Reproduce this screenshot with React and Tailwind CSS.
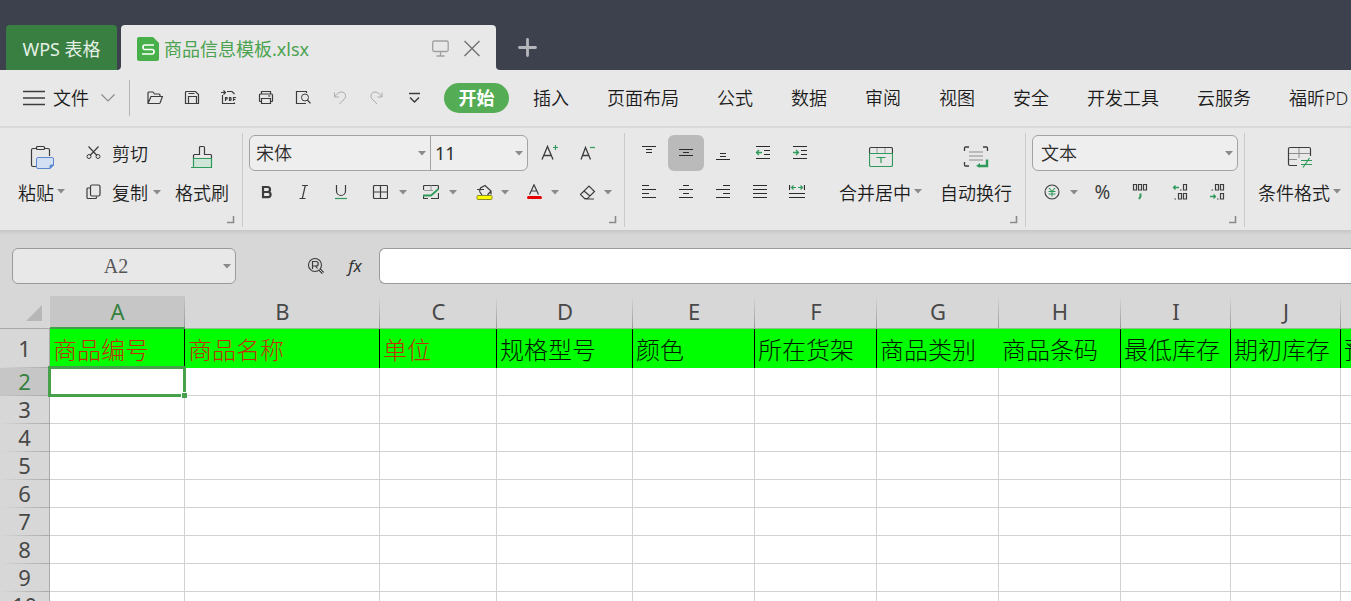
import React, { useState } from "react";

const INK = "#3c3c3c";
const GREEN = "#2f9a5a";

const menus = [
  "插入",
  "页面布局",
  "公式",
  "数据",
  "审阅",
  "视图",
  "安全",
  "开发工具",
  "云服务",
  "福昕PD",
];

const columns = [
  { id: "A", width: "w-[135px]", title: "商品编号", required: true },
  { id: "B", width: "w-[195px]", title: "商品名称", required: true },
  { id: "C", width: "w-[117px]", title: "单位", required: true },
  { id: "D", width: "w-[136px]", title: "规格型号" },
  { id: "E", width: "w-[122px]", title: "颜色" },
  { id: "F", width: "w-[122px]", title: "所在货架" },
  { id: "G", width: "w-[122px]", title: "商品类别", open: true },
  { id: "H", width: "w-[122px]", title: "商品条码" },
  { id: "I", width: "w-[110px]", title: "最低库存" },
  { id: "J", width: "w-[110px]", title: "期初库存" },
  { id: "K", width: "w-[110px]", title: "预" },
];

const rows = [2, 3, 4, 5, 6, 7, 8, 9, 10];

const Icon = ({ w = 16, h = 16, children, stroke = INK }) => (
  <svg
    width={w}
    height={h}
    viewBox={`0 0 ${w} ${h}`}
    fill="none"
    stroke={stroke}
    className="shrink-0"
    aria-hidden="true"
  >
    {children}
  </svg>
);

const Caret = () => (
  <svg width="8" height="5" viewBox="0 0 8 5" className="shrink-0" aria-hidden="true">
    <path d="M0 0h8L4 4.5z" fill="#8a8a8a" />
  </svg>
);

const ToolButton = ({ label, className = "w-[37px]", children }) => (
  <button
    title={label}
    aria-label={label}
    className={`flex h-9 shrink-0 items-center justify-center ${className}`}
  >
    {children}
  </button>
);

// Icon with a drop-down caret next to it
const SplitButton = ({ label, className, children }) => (
  <button
    title={label}
    aria-label={label}
    className={`flex h-9 shrink-0 items-center justify-between ${className}`}
  >
    {children}
    <Caret />
  </button>
);

const BigButton = ({ label, caret, icon, className = "" }) => (
  <button className={`flex shrink-0 flex-col gap-[3px] ${className}`}>
    <span className="flex h-9 w-full items-center justify-center pt-2">{icon}</span>
    <span className="flex h-9 items-center gap-[3px] pt-0.5 whitespace-nowrap">
      {label}
      {caret && (
        <span className="pb-1">
          <Caret />
        </span>
      )}
    </span>
  </button>
);

const Group = ({ launcher = true, className = "", children }) => (
  <section className={`flex shrink-0 flex-col pt-[7px] ${className}`}>
    <div className="flex">{children}</div>
    {launcher && (
      <button aria-label="更多设置" className="mt-[6px] mr-[7px] self-end">
        <Icon w={8} h={8} stroke="#8a8a8a">
          <path d="M0 6.5h6.5V0" strokeWidth="1.6" />
        </Icon>
      </button>
    )}
  </section>
);

const Divider = () => <div className="mt-[5px] h-[94px] w-px shrink-0 bg-[#cbcbcb]" />;

const Combo = ({ label, value, className }) => (
  <label className={`relative flex h-9 items-center ${className}`}>
    <select
      aria-label={label}
      defaultValue={value}
      className="h-full w-full appearance-none bg-transparent pl-1.5 pr-4 text-[18px] outline-none"
    >
      <option>{value}</option>
    </select>
    <span className="pointer-events-none absolute right-1">
      <Caret />
    </span>
  </label>
);

const TitleBar = () => (
  <header className="bg-[#3d414e] pt-[25px]">
    <div className="flex h-[45px]">
      <button className="ml-1.5 w-[111px] rounded-t-[4px] bg-[#397f41] pt-1 text-[18px] font-normal text-[#e4f0e5]">
        WPS 表格
      </button>
      <div className="mt-4 w-1 bg-[#e8e8e8]">
        <div className="h-full rounded-br-[4px] bg-[#3d414e]" />
      </div>
      <div className="flex w-[375px] items-center rounded-t-[4px] bg-[#e8e8e8] px-4 pt-0.5">
        <Icon w={22} h={24} stroke="none">
          <path d="M2 0h14l6 6v16a2 2 0 0 1-2 2H2a2 2 0 0 1-2-2V2a2 2 0 0 1 2-2z" fill="#47b04b" />
          <path
            d="M17 8H8Q6 8 6 10.300T8 12.500H15Q17 12.500 17 14.800T15 17H5"
            stroke="#fff"
            strokeWidth="1.700"
          />
        </Icon>
        <span className="ml-[5px] pt-0.5 text-[18px] font-normal text-[#4ba350]">商品信息模板.xlsx</span>
        <button aria-label="演示" className="ml-auto mr-[15px]">
          <Icon w={17} h={17} stroke="#a0a0a0">
            <rect x=".7" y="1" width="15.500" height="10.500" rx="1.500" strokeWidth="1.300" />
            <path d="M8.500 12v4M4.500 16h8" strokeWidth="1.300" />
          </Icon>
        </button>
        <button aria-label="关闭">
          <Icon w={16} h={17} stroke="#747474">
            <path d="M.5 1l15 15M15.500 1L.5 16" strokeWidth="1.500" />
          </Icon>
        </button>
      </div>
      <div className="mt-4 flex flex-1 bg-[#e8e8e8]">
        <div className="flex flex-1 items-start rounded-bl-[4px] bg-[#3d414e] pl-[22px]">
          <button aria-label="新建" className="-mt-[3px]">
            <Icon w={19} h={19} stroke="#b4b6bb">
              <path d="M9.500 1.500v16M1.500 9.500h16" strokeWidth="2.800" strokeLinecap="round" />
            </Icon>
          </button>
        </div>
      </div>
    </div>
  </header>
);

const MenuBar = () => (
  <nav className="flex h-[58px] items-center overflow-hidden border-b-2 border-[#d9d9d9] text-[18px] whitespace-nowrap text-[#1c1c1c]">
    <button className="ml-[23px] flex shrink-0 items-center">
      <Icon w={22} h={16}>
        <path d="M0 1.500h22M0 8h22M0 14.500h22" strokeWidth="1.300" />
      </Icon>
      <span className="ml-2 mr-3">文件</span>
      <Icon w={14} h={8} stroke="#8c8c8c">
        <path d="M.5.5L7 7 13.500.5" strokeWidth="1.200" />
      </Icon>
    </button>
    <div className="ml-3.5 mr-1.5 h-9 w-px shrink-0 bg-[#b5b5b5]" />

    <ToolButton label="打开">
      <Icon>
        <path d="M1 13.500V3a1 1 0 0 1 1-1h4l1.500 2H12a1 1 0 0 1 1 1v1.500M1 13.500L4 6.500h11.500L13 13a1 1 0 0 1-1 .5z" strokeLinejoin="round" strokeWidth="1.200" />
      </Icon>
    </ToolButton>
    <ToolButton label="保存">
      <Icon>
        <path d="M2.500 1.500h9l3 3v9h-13v-11a1 1 0 0 1 1-1zM4.500 13V6.500h8V13M4.500 3.500h6" strokeWidth="1.200" />
      </Icon>
    </ToolButton>
    <ToolButton label="输出为PDF">
      <Icon>
        <path d="M0 2.500h4M2.500.5l2 2-2 2M6 1.500h5l2.500 2.500M1.500 5v8.500h12v-1" strokeWidth="1.200" />
        <path d="M4.500 11V7.500h1.500v1.500H4.500M8.500 7.500v3h1l.5-.5V8l-.5-.5zM12.500 11V7.500H15M12.500 9.500H14.500" strokeWidth="1.200" />
      </Icon>
    </ToolButton>
    <ToolButton label="打印">
      <Icon>
        <path d="M3.500 4V1.500h9V4M3.500 11.500H2a.5.5 0 0 1-.5-.5V5a1 1 0 0 1 1-1h11a1 1 0 0 1 1 1v6a.5.5 0 0 1-.5.5h-1.500M10 6h2.500M3.500 8.500h9v5h-9z" strokeWidth="1.200" />
      </Icon>
    </ToolButton>
    <ToolButton label="打印预览">
      <Icon>
        <path d="M11.500 3V1.500h-10V13.500H11" strokeWidth="1.200" />
        <circle cx="10" cy="7.500" r="3.500" />
        <path d="M12.300 10l3.200 3.300" strokeWidth="1.200" />
      </Icon>
    </ToolButton>
    <ToolButton label="撤销">
      <Icon stroke="#ababab">
        <path d="M2.500 2.500v4.500h4.500M2.500 7C5 3.500 7 2 9.500 2a4 4 0 0 1 3 6.800L7.500 14" />
      </Icon>
    </ToolButton>
    <ToolButton label="恢复">
      <Icon stroke="#ababab">
        <path d="M13 2.500v4.500H8.500M13 7C10.500 3.500 8.500 2 6 2a4 4 0 0 0-3 6.800L8 14" />
      </Icon>
    </ToolButton>
    <ToolButton label="自定义快速访问工具栏">
      <Icon>
        <path d="M3 3.500h11M4 7.500l4.500 4.500L13 7.500" strokeWidth="1.500" />
      </Icon>
    </ToolButton>

    <button className="ml-3 mr-6 h-[30px] w-[65px] shrink-0 rounded-full bg-[#54ad54] font-bold text-white">
      开始
    </button>
    <div className="flex gap-[38px]">
      {menus.map((name) => (
        <button key={name} className="shrink-0">
          {name}
        </button>
      ))}
    </div>
  </nav>
);

const Lines = ({ d }) => (
  <Icon stroke="#2b2b2b">
    <path d={d} strokeWidth="1.200" />
  </Icon>
);

const Ribbon = () => (
  <div className="flex h-[102px] overflow-hidden text-[18px] text-[#1c1c1c]">
    <Group className="w-[242px]">
      <BigButton
        label="粘贴"
        caret
        className="ml-[18px]"
        icon={
          <Icon w={24} h={24}>
            <path d="M6 3.500H3a1.500 1.500 0 0 0-1.500 1.500v15A1.500 1.500 0 0 0 3 21.500h3M15 3.500h3A1.500 1.500 0 0 1 19.500 5v6" strokeWidth="1.200" />
            <rect x="6.500" y="1.500" width="8" height="3" rx="1" strokeWidth="1.200" />
            <path d="M8 12.500h14a1.500 1.500 0 0 1 1.500 1.500v6l-3.500 3.500H8A1.500 1.500 0 0 1 6.500 22v-8A1.500 1.500 0 0 1 8 12.500z" fill="#d3dff3" stroke="#5b87cf" />
            <path d="M23.500 20l-3.500 3.500v-2.500a1 1 0 0 1 1-1z" fill="#5b87cf" stroke="#5b87cf" />
          </Icon>
        }
      />
      <div className="ml-[21px] flex w-[75px] flex-col gap-[3px]">
        <button className="flex h-9 items-center">
          <Icon w={15} h={16}>
            <path d="M2.500 1.500l8.500 9M12.500 1.500L4 10.500" strokeWidth="1.200" />
            <circle cx="3" cy="11.500" r="2" />
            <circle cx="12" cy="11.500" r="2" />
          </Icon>
          <span className="ml-[11px] pt-0.5">剪切</span>
        </button>
        <button className="flex h-9 items-center">
          <Icon w={15} h={16}>
            <rect x="4.500" y="1" width="9.500" height="11" rx="1.500" strokeWidth="1.200" />
            <path d="M4 4H2a1 1 0 0 0-1 1v8.500a1 1 0 0 0 1 1h7.500a1 1 0 0 0 1-1V12.500" strokeWidth="1.200" />
          </Icon>
          <span className="ml-[11px] mr-[5px] pt-0.5">复制</span>
          <Caret />
        </button>
      </div>
      <BigButton
        label="格式刷"
        className="ml-[14px]"
        icon={
          <Icon w={22} h={24}>
            <path d="M2.500 13V10.500a1 1 0 0 1 1-1H8.500V2.500a1 1 0 0 1 1-1h3a1 1 0 0 1 1 1v7h6a1 1 0 0 1 1 1V13" strokeWidth="1.200" />
            <path d="M0 22.500h20.500v-9h-18V22" fill="#cfe5d8" stroke={GREEN} strokeWidth="1.200" />
          </Icon>
        }
      />
    </Group>
    <Divider />

    <Group className="w-[381px]">
      <div className="ml-1.5 flex flex-1 flex-col gap-[3px]">
        <div className="flex">
          <div className="flex h-9 w-[279px] rounded-md border border-[#a3a3a3] bg-[#eee] text-[#2c2c2c]">
            <Combo label="字体" value="宋体" className="-mt-px w-[181px] border-r border-[#a3a3a3]" />
            <Combo label="字号" value="11" className="-mt-px -ml-0.5 flex-1 font-normal" />
          </div>
          <ToolButton label="增大字号" className="ml-[3px] w-[38px]">
            <Icon w={18} h={18}>
              <path d="M1 15.500L6.500 2.500l5.500 13M3 11.500h7" strokeWidth="1.300" />
              <path d="M14.500 1v5M12 3.500h5" stroke={GREEN} strokeWidth="1.200" />
            </Icon>
          </ToolButton>
          <ToolButton label="减小字号" className="w-[38px]">
            <Icon w={18} h={18}>
              <path d="M2 15.500L6.500 3.500l5 12M4 11.500h6" strokeWidth="1.300" />
              <path d="M11 3.500h5" stroke={GREEN} strokeWidth="1.200" />
            </Icon>
          </ToolButton>
        </div>
        <div className="flex">
          <ToolButton label="加粗" className="w-[35px]">
            <Icon>
              <path d="M4 3h4.500a2.300 2.300 0 0 1 0 5H4zM4 8h5a2.500 2.500 0 0 1 0 5.200H4z" strokeWidth="2.200" />
            </Icon>
          </ToolButton>
          <ToolButton label="倾斜" className="w-10">
            <Icon>
              <path d="M6 1.500h6M3.500 14.500h6M9.300 1.500l-3 13" strokeWidth="1.200" />
            </Icon>
          </ToolButton>
          <ToolButton label="下划线" className="w-[34px]">
            <Icon>
              <path d="M3.500 1v6a4.500 4.500 0 0 0 9 0V1" strokeWidth="1.200" />
              <path d="M2 14.500h12" stroke={GREEN} strokeWidth="1.200" />
            </Icon>
          </ToolButton>
          <SplitButton label="边框" className="ml-[14px] w-[35px]">
            <Icon>
              <rect x="1.500" y="1.500" width="14" height="13" rx="1" strokeWidth="1.200" />
              <path d="M8.500 1.500v13M1.500 8h14" strokeWidth="1.200" />
            </Icon>
          </SplitButton>
          <SplitButton label="绘图边框" className="ml-4 w-[34px]">
            <Icon>
              <path d="M.5 6V2.500a1 1 0 0 1 1-1h13a1 1 0 0 1 1 1V5M15.500 9v5.500H8M.5 12v2.500H5" strokeWidth="1.200" />
              <path d="M8 1.500V7M1 6.500h9" stroke="#9a9a9a" />
              <path d="M0 11.500h8L15.500 5" stroke={GREEN} strokeWidth="1.800" />
            </Icon>
          </SplitButton>
          <SplitButton label="填充颜色" className="ml-[19px] w-[33px]">
            <Icon w={17} h={17}>
              <path d="M1 5.500h7M3.500 7.500L4.500 4 9 1.500l6 5.500-3.500 4M3.500 7.500L6 11M15 7v3.500" strokeWidth="1.200" />
              <rect x="1" y="11.500" width="15" height="4" rx="1" fill="#ff0" stroke="#8d8d28" />
            </Icon>
          </SplitButton>
          <SplitButton label="字体颜色" className="ml-[18px] w-8">
            <Icon>
              <path d="M2.500 10.500L7 .8l4.500 9.700M4.300 7h5.500" strokeWidth="1.200" />
              <path d="M1.500 13.500h12" stroke="#e60000" strokeWidth="3" strokeLinecap="round" />
            </Icon>
          </SplitButton>
          <SplitButton label="清除" className="ml-5 w-[33px]">
            <Icon w={17} h={17}>
              <path d="M1.500 10.500L10 2l5.500 5.500L8.500 14.500h-3zM5 7l6 5M5.500 15h9.500" strokeWidth="1.200" />
            </Icon>
          </SplitButton>
        </div>
      </div>
    </Group>
    <Divider />

    <Group className="w-[400px]">
      <div className="ml-[5px] flex w-[190px] flex-col gap-[3px]">
        <div className="flex">
          <ToolButton label="顶端对齐" className="w-[38px]">
            <Lines d="M1 1.500h14M5 4.500h6M5 7.500h6" />
          </ToolButton>
          <ToolButton label="垂直居中" className="w-9 rounded-md bg-[#bababa]">
            <Lines d="M1 4.500h14M5 7.500h6M1 10.500h14" />
          </ToolButton>
          <ToolButton label="底端对齐" className="w-[38px]">
            <Lines d="M5 8.500h6M5 11.500h6M1 14.500h14" />
          </ToolButton>
          <ToolButton label="减少缩进量" className="ml-0.5 w-[37px]">
            <Icon stroke="#2b2b2b">
              <path d="M1 1.500h14M9 5.500h6M9 9.500h6M1 13.500h14" strokeWidth="1.200" />
              <path d="M7 7.500H1M4 5L1.500 7.500 4 10" stroke={GREEN} strokeWidth="1.300" />
            </Icon>
          </ToolButton>
          <ToolButton label="增加缩进量">
            <Icon stroke="#2b2b2b">
              <path d="M1 1.500h14M9 5.500h6M9 9.500h6M1 13.500h14" strokeWidth="1.200" />
              <path d="M1 7.500h6M4 5l2.500 2.500L4 10" stroke={GREEN} strokeWidth="1.300" />
            </Icon>
          </ToolButton>
        </div>
        <div className="flex">
          <ToolButton label="左对齐">
            <Lines d="M1 1.500h7M1 5.500h14M1 9.500h7M1 13.500h14" />
          </ToolButton>
          <ToolButton label="居中">
            <Lines d="M5 1.500h6M1 5.500h14M5 9.500h6M1 13.500h14" />
          </ToolButton>
          <ToolButton label="右对齐">
            <Lines d="M8 1.500h7M1 5.500h14M8 9.500h7M1 13.500h14" />
          </ToolButton>
          <ToolButton label="两端对齐">
            <Lines d="M1 1.500h14M1 5.500h14M1 9.500h14M1 13.500h14" />
          </ToolButton>
          <ToolButton label="分散对齐">
            <Icon stroke="#2b2b2b">
              <path d="M.5 1v5M15.500 1v5M0 9.500h16M0 13.500h16" strokeWidth="1.200" />
              <path d="M7 3.500H2.500M4.500 1.500l-2 2 2 2M9 3.500h4.500M11.500 1.500l2 2-2 2" stroke={GREEN} strokeWidth="1.200" />
            </Icon>
          </ToolButton>
        </div>
      </div>
      <BigButton
        label="合并居中"
        caret
        className="ml-[19px]"
        icon={
          <Icon w={24} h={22}>
            <path d="M.5 7.500V3A1.500 1.500 0 0 1 2 1.500h20A1.500 1.500 0 0 1 23.500 3v4.500" strokeWidth="1.200" />
            <path d="M8 2v5M16 2v5" stroke="#9a9a9a" />
            <path d="M.5 7.500h23V19a1.500 1.500 0 0 1-1.500 1.500H2A1.500 1.500 0 0 1 .5 19zM7.500 11.500h9M12 11.500V17" stroke={GREEN} strokeWidth="1.200" />
          </Icon>
        }
      />
      <BigButton
        label="自动换行"
        className="ml-[18px]"
        icon={
          <Icon w={26} h={22}>
            <path d="M1.500 5V2a1 1 0 0 1 1-1H6M20 1h3.500a1 1 0 0 1 1 1v3M1.500 16v3a1 1 0 0 0 1 1H6" strokeWidth="1.300" />
            <path d="M6 6h14M6 10h14M6 14h14" stroke="#8c8c8c" />
            <path d="M24 13.500V20H15" stroke={GREEN} strokeWidth="2.400" />
            <path d="M13 20l4-3v4.500z" fill={GREEN} stroke="none" />
          </Icon>
        }
      />
    </Group>
    <Divider />

    <Group className="w-[218px]">
      <div className="ml-1.5 flex flex-col gap-[3px]">
        <div className="h-9 w-[206px] rounded-md border border-[#a3a3a3] bg-[#eee] text-[#2c2c2c]">
          <Combo label="数字格式" value="文本" className="-mt-px pl-0.5" />
        </div>
        <div className="flex">
          <SplitButton label="货币样式" className="ml-3 w-[34px]">
            <Icon>
              <circle cx="8" cy="8" r="7" strokeWidth="1.100" />
              <path d="M5 4l3 3.500L11 4M4.500 7.500h7M4.500 10h7M8 7.500V12.500" stroke={GREEN} strokeWidth="1.100" />
            </Icon>
          </SplitButton>
          <ToolButton label="百分比样式" className="ml-1.5 w-[37px]">
            <span className="text-[19px] font-normal text-[#3c3c3c]">%</span>
          </ToolButton>
          <ToolButton label="千位分隔样式">
            <Icon w={16} h={18}>
              <path d="M1.500 1.500h3v5.500h-3zM6.500 1.500h3v5.500h-3zM11.500 1.500h3v5.500h-3z" strokeWidth="1.200" />
              <path d="M8.500 10.500v3L7 16" stroke={GREEN} strokeWidth="2" />
            </Icon>
          </ToolButton>
          <ToolButton label="增加小数位数" className="ml-[3px] w-[37px]">
            <Icon w={16} h={18}>
              <path d="M11.500 1.500h3v5.500h-3zM6.500 10.500h3V16h-3zM11.500 10.500h3V16h-3z" strokeWidth="1.200" />
              <path d="M8 7h1.500M2.500 16H4" strokeWidth="1.200" />
              <path d="M7 4.500H1.500M3.500 2.500l-2 2 2 2" stroke={GREEN} strokeWidth="1.300" />
            </Icon>
          </ToolButton>
          <ToolButton label="减少小数位数">
            <Icon w={16} h={18}>
              <path d="M6.500 1.500h3v5.500h-3zM11.500 1.500h3v5.500h-3zM11.500 10.500h3V16h-3z" strokeWidth="1.200" />
              <path d="M2.500 7H4M8 16h1.500" strokeWidth="1.200" />
              <path d="M1 13.500h5.500M4.500 11.500l2 2-2 2" stroke={GREEN} strokeWidth="1.300" />
            </Icon>
          </ToolButton>
        </div>
      </div>
    </Group>
    <Divider />

    <Group launcher={false}>
      <BigButton
        label="条件格式"
        caret
        className="ml-[13px]"
        icon={
          <Icon w={26} h={22}>
            <path d="M10 19.500H3A1.500 1.500 0 0 1 1.500 18V3A1.500 1.500 0 0 1 3 1.500h19A1.500 1.500 0 0 1 23.500 3v7" strokeWidth="1.200" />
            <path d="M2 7.500h21M12 2v10M2 13.500h8" stroke="#8c8c8c" />
            <path d="M14 14.500h11M14 18.500h11M22.500 12L16 21.500" stroke={GREEN} strokeWidth="1.200" />
          </Icon>
        }
      />
    </Group>
  </div>
);

const FormulaBar = () => {
  const [value, setValue] = useState("");

  return (
    <div className="flex h-[66px] items-center bg-[linear-gradient(to_bottom,#c6c6c6,#d7d7d7_5px)] pt-1.5 pl-3">
      <label className="relative flex h-9 w-[224px] items-center rounded-md border border-[#9a9a9a] bg-[#e8e8e8]">
        <input
          aria-label="名称框"
          defaultValue="A2"
          className="h-full w-full bg-transparent pr-4 text-center font-['Liberation_Serif',serif] text-[20px] text-[#555] outline-none"
        />
        <span className="absolute right-1">
          <Caret />
        </span>
      </label>
      <button aria-label="查找" className="ml-[71px]">
        <Icon w={18} h={18}>
          <circle cx="8" cy="8" r="6.500" strokeWidth="1.100" />
          <path d="M5.500 12V4.500H9a2 2 0 0 1 0 4.500H5.500M8.500 9l2 2.500" strokeWidth="1.200" />
          <path d="M12.500 12.500l3.500 3.500" strokeWidth="3" />
          <path d="M12.500 12.500l3.300 3.300" stroke="#d7d7d7" />
        </Icon>
      </button>
      <button
        aria-label="插入函数"
        className="ml-[22px] w-4 font-['Noto_Sans',sans-serif] text-[17px] font-normal text-[#333] italic"
      >
        fx
      </button>
      <input
        aria-label="编辑栏"
        value={value}
        onChange={(e) => setValue(e.target.value)}
        className="ml-4 h-9 min-w-0 flex-1 rounded-l-md border border-r-0 border-[#9a9a9a] bg-white px-2 text-[18px] outline-none"
      />
    </div>
  );
};

const rowHead =
  "border-r border-[#a9a9a9] bg-[linear-gradient(to_right,transparent,#a9a9a9)] bg-[length:100%_1px] bg-bottom bg-no-repeat p-0 pb-0.5 text-center text-[22px] leading-none font-normal";

const Sheet = () => (
  <table className="w-[1451px] table-fixed border-separate border-spacing-0 bg-white">
    <thead>
      <tr className="h-[33px]">
        <th className="w-[50px] border-b border-[#a9a9a9] bg-[#d7d7d7] p-0">
          <svg width="16" height="16" viewBox="0 0 16 16" className="mt-0.5 ml-[26px]" aria-hidden="true">
            <path d="M16 0v16H0z" fill="#b7b7b7" />
          </svg>
        </th>
        {columns.map((col) => (
          <th
            key={col.id}
            className={`bg-[linear-gradient(to_bottom,transparent,#999)] bg-[length:1px_100%] bg-right bg-no-repeat p-0 pb-0.5 text-[22px] leading-none font-normal ${col.width} ${
              col.id === "A"
                ? "border-b-2 border-[#3fa047] bg-[#c6c6c6] text-[#35803f]"
                : "border-b border-[#8fbf8f] bg-[#d7d7d7] text-[#484848]"
            }`}
          >
            {col.id}
          </th>
        ))}
      </tr>
    </thead>
    <tbody>
      <tr className="h-[39px]">
        <th className={`${rowHead} bg-[#d7d7d7] text-[#484848]`}>1</th>
        {columns.map((col) => (
          <td
            key={col.id}
            className={`overflow-hidden border-r bg-[#00ff00] p-0 pt-0.5 pl-[3px] text-2xl leading-none font-light whitespace-nowrap ${
              col.required ? "text-[#c03000]" : "text-[#001a00]"
            } ${col.open ? "border-[#00ff00]" : "border-black"}`}
          >
            {col.title}
          </td>
        ))}
      </tr>
      {rows.map((row) => (
        <tr key={row} className="h-7">
          <th className={`${rowHead} ${row === 2 ? "bg-[#c6c6c6] text-[#35803f]" : "bg-[#d7d7d7] text-[#484848]"}`}>
            {row}
          </th>
          {columns.map((col) => (
            <td key={col.id} className="relative border-r border-b border-[#d2d2d2] p-0">
              {row === 2 && col.id === "A" && (
                <div className="absolute -inset-0.5 z-10 border-[3px] border-[#47a14b]">
                  <div className="absolute -right-1 -bottom-1 size-[6px] border-t border-l border-white bg-[#47a14b]" />
                </div>
              )}
            </td>
          ))}
        </tr>
      ))}
    </tbody>
  </table>
);

const App = () => {
  return (
    <div className="h-screen overflow-hidden bg-[#e8e8e8] font-['Noto_Sans','Noto_Sans_CJK_SC',sans-serif] font-[350]">
      <TitleBar />
      <MenuBar />
      <Ribbon />
      <FormulaBar />
      <Sheet />
    </div>
  );
};

export default App;
